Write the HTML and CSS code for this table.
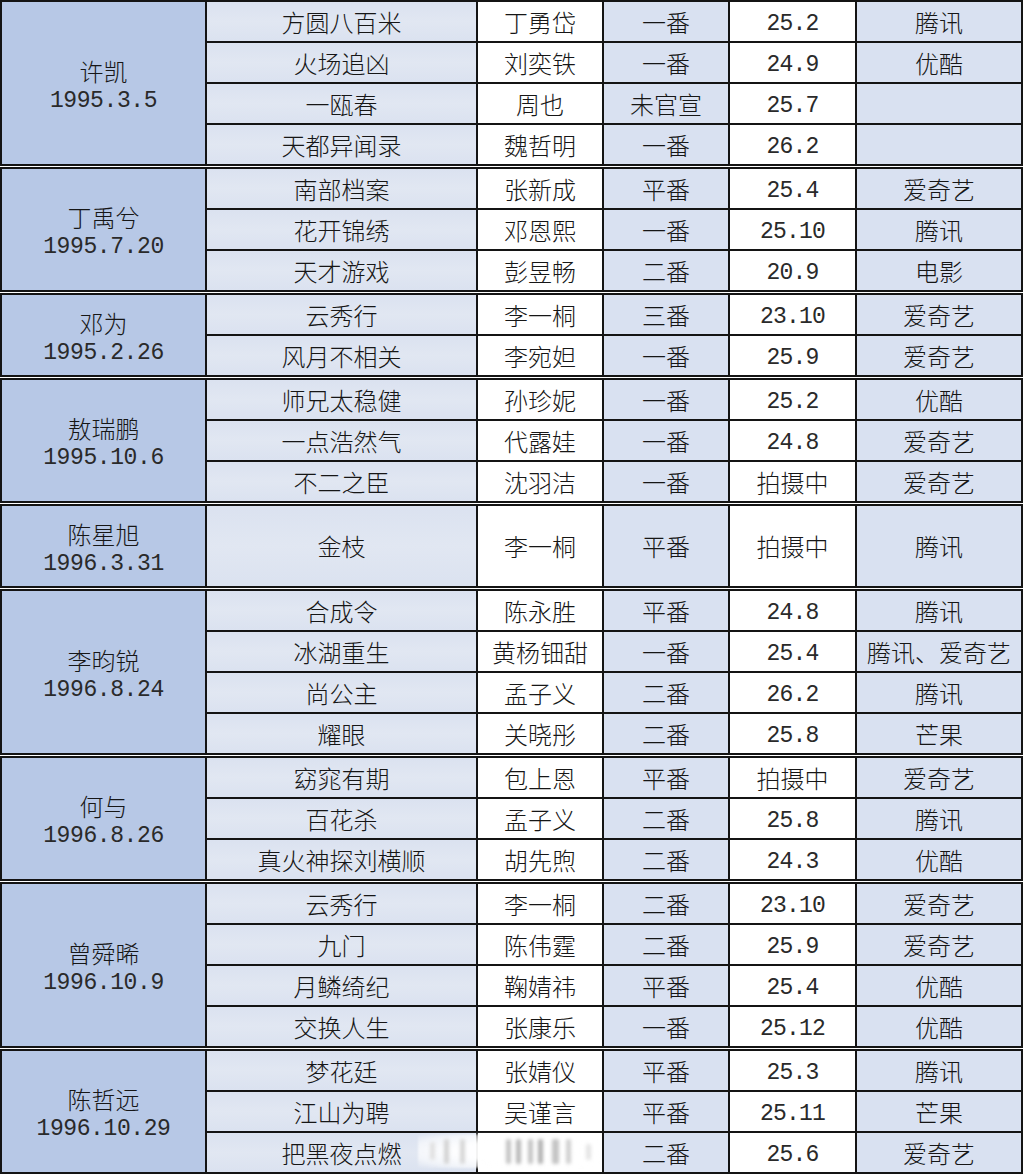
FILE: index.html
```html
<!DOCTYPE html>
<html lang="zh">
<head>
<meta charset="utf-8">
<title>剧集表</title>
<link rel="stylesheet" href="styles.css">
</head>
<body>
<div class="sheet">

<table class="grp">
<colgroup><col class="c1"><col class="c2"><col class="c3"><col class="c4"><col class="c5"><col class="c6"></colgroup>
<tr><td class="name" rowspan="4"><div class="nm">许凯</div><div class="num">1995.3.5</div></td><td class="title">方圆八百米</td><td class="actor">丁勇岱</td><td class="rank">一番</td><td class="date"><span class="num">25.2</span></td><td class="plat">腾讯</td></tr>
<tr><td class="title">火场追凶</td><td class="actor">刘奕铁</td><td class="rank">一番</td><td class="date"><span class="num">24.9</span></td><td class="plat">优酷</td></tr>
<tr><td class="title">一瓯春</td><td class="actor">周也</td><td class="rank">未官宣</td><td class="date"><span class="num">25.7</span></td><td class="plat"></td></tr>
<tr><td class="title">天都异闻录</td><td class="actor">魏哲明</td><td class="rank">一番</td><td class="date"><span class="num">26.2</span></td><td class="plat"></td></tr>
</table>

<table class="grp">
<colgroup><col class="c1"><col class="c2"><col class="c3"><col class="c4"><col class="c5"><col class="c6"></colgroup>
<tr><td class="name" rowspan="3"><div class="nm">丁禹兮</div><div class="num">1995.7.20</div></td><td class="title">南部档案</td><td class="actor">张新成</td><td class="rank">平番</td><td class="date"><span class="num">25.4</span></td><td class="plat">爱奇艺</td></tr>
<tr><td class="title">花开锦绣</td><td class="actor">邓恩熙</td><td class="rank">一番</td><td class="date"><span class="num">25.10</span></td><td class="plat">腾讯</td></tr>
<tr><td class="title">天才游戏</td><td class="actor">彭昱畅</td><td class="rank">二番</td><td class="date"><span class="num">20.9</span></td><td class="plat">电影</td></tr>
</table>

<table class="grp">
<colgroup><col class="c1"><col class="c2"><col class="c3"><col class="c4"><col class="c5"><col class="c6"></colgroup>
<tr><td class="name" rowspan="2"><div class="nm">邓为</div><div class="num">1995.2.26</div></td><td class="title">云秀行</td><td class="actor">李一桐</td><td class="rank">三番</td><td class="date"><span class="num">23.10</span></td><td class="plat">爱奇艺</td></tr>
<tr><td class="title">风月不相关</td><td class="actor">李宛妲</td><td class="rank">一番</td><td class="date"><span class="num">25.9</span></td><td class="plat">爱奇艺</td></tr>
</table>

<table class="grp">
<colgroup><col class="c1"><col class="c2"><col class="c3"><col class="c4"><col class="c5"><col class="c6"></colgroup>
<tr><td class="name" rowspan="3"><div class="nm">敖瑞鹏</div><div class="num">1995.10.6</div></td><td class="title">师兄太稳健</td><td class="actor">孙珍妮</td><td class="rank">一番</td><td class="date"><span class="num">25.2</span></td><td class="plat">优酷</td></tr>
<tr><td class="title">一点浩然气</td><td class="actor">代露娃</td><td class="rank">一番</td><td class="date"><span class="num">24.8</span></td><td class="plat">爱奇艺</td></tr>
<tr><td class="title">不二之臣</td><td class="actor">沈羽洁</td><td class="rank">一番</td><td class="date">拍摄中</td><td class="plat">爱奇艺</td></tr>
</table>

<table class="grp">
<colgroup><col class="c1"><col class="c2"><col class="c3"><col class="c4"><col class="c5"><col class="c6"></colgroup>
<tr class="tall"><td class="name"><div class="nm">陈星旭</div><div class="num">1996.3.31</div></td><td class="title">金枝</td><td class="actor">李一桐</td><td class="rank">平番</td><td class="date">拍摄中</td><td class="plat">腾讯</td></tr>
</table>

<table class="grp">
<colgroup><col class="c1"><col class="c2"><col class="c3"><col class="c4"><col class="c5"><col class="c6"></colgroup>
<tr><td class="name" rowspan="4"><div class="nm">李昀锐</div><div class="num">1996.8.24</div></td><td class="title">合成令</td><td class="actor">陈永胜</td><td class="rank">平番</td><td class="date"><span class="num">24.8</span></td><td class="plat">腾讯</td></tr>
<tr><td class="title">冰湖重生</td><td class="actor">黄杨钿甜</td><td class="rank">一番</td><td class="date"><span class="num">25.4</span></td><td class="plat">腾讯、爱奇艺</td></tr>
<tr><td class="title">尚公主</td><td class="actor">孟子义</td><td class="rank">二番</td><td class="date"><span class="num">26.2</span></td><td class="plat">腾讯</td></tr>
<tr><td class="title">耀眼</td><td class="actor">关晓彤</td><td class="rank">二番</td><td class="date"><span class="num">25.8</span></td><td class="plat">芒果</td></tr>
</table>

<table class="grp">
<colgroup><col class="c1"><col class="c2"><col class="c3"><col class="c4"><col class="c5"><col class="c6"></colgroup>
<tr><td class="name" rowspan="3"><div class="nm">何与</div><div class="num">1996.8.26</div></td><td class="title">窈窕有期</td><td class="actor">包上恩</td><td class="rank">平番</td><td class="date">拍摄中</td><td class="plat">爱奇艺</td></tr>
<tr><td class="title">百花杀</td><td class="actor">孟子义</td><td class="rank">二番</td><td class="date"><span class="num">25.8</span></td><td class="plat">腾讯</td></tr>
<tr><td class="title">真火神探刘横顺</td><td class="actor">胡先煦</td><td class="rank">二番</td><td class="date"><span class="num">24.3</span></td><td class="plat">优酷</td></tr>
</table>

<table class="grp">
<colgroup><col class="c1"><col class="c2"><col class="c3"><col class="c4"><col class="c5"><col class="c6"></colgroup>
<tr><td class="name" rowspan="4"><div class="nm">曾舜晞</div><div class="num">1996.10.9</div></td><td class="title">云秀行</td><td class="actor">李一桐</td><td class="rank">二番</td><td class="date"><span class="num">23.10</span></td><td class="plat">爱奇艺</td></tr>
<tr><td class="title">九门</td><td class="actor">陈伟霆</td><td class="rank">二番</td><td class="date"><span class="num">25.9</span></td><td class="plat">爱奇艺</td></tr>
<tr><td class="title">月鳞绮纪</td><td class="actor">鞠婧祎</td><td class="rank">平番</td><td class="date"><span class="num">25.4</span></td><td class="plat">优酷</td></tr>
<tr><td class="title">交换人生</td><td class="actor">张康乐</td><td class="rank">一番</td><td class="date"><span class="num">25.12</span></td><td class="plat">优酷</td></tr>
</table>

<table class="grp last">
<colgroup><col class="c1"><col class="c2"><col class="c3"><col class="c4"><col class="c5"><col class="c6"></colgroup>
<tr><td class="name" rowspan="3"><div class="nm">陈哲远</div><div class="num">1996.10.29</div></td><td class="title">梦花廷</td><td class="actor">张婧仪</td><td class="rank">平番</td><td class="date"><span class="num">25.3</span></td><td class="plat">腾讯</td></tr>
<tr><td class="title">江山为聘</td><td class="actor">吴谨言</td><td class="rank">平番</td><td class="date"><span class="num">25.11</span></td><td class="plat">芒果</td></tr>
<tr><td class="title">把黑夜点燃</td><td class="actor"></td><td class="rank">二番</td><td class="date"><span class="num">25.6</span></td><td class="plat">爱奇艺</td></tr>
</table>

<div class="watermark" aria-hidden="true">
  <span class="bar b1"></span><span class="bar b2"></span><span class="bar b3"></span><span class="bar b4"></span><span class="bar b5"></span><span class="bar b6"></span><span class="bar b7"></span><span class="bar b8"></span><span class="bar b9"></span><span class="bar b10"></span>
</div>

</div>
</body>
</html>
```

FILE: styles.css
```css
html, body {
  margin: 0;
  padding: 0;
  background: #ffffff;
}

.sheet {
  position: relative;
  width: 1024px;
  height: 1175px;
  display: flex;
  flex-direction: column;
  gap: 1px;
}

.grp {
  border-collapse: collapse;
  table-layout: fixed;
  width: 1023px;
  border: 2px solid #141414;
  font-family: "Noto Sans CJK SC", sans-serif;
  font-weight: 300;
  font-size: 24px;
  color: #161616;
}

.c1 { width: 205px; }
.c2 { width: 271px; }
.c3 { width: 126px; }
.c4 { width: 126px; }
.c5 { width: 127px; }
.c6 { width: 166px; }

.grp td {
  border: 2px solid #141414;
  height: 39px;
  padding: 0;
  text-align: center;
  vertical-align: middle;
  line-height: 30px;
  white-space: nowrap;
  overflow: hidden;
}

.grp tr.tall td {
  height: 80px;
}

.grp td.name {
  background: #b7c8e6;
  height: auto;
}

.name .nm {
  padding-top: 5px;
  height: 30px;
}

.name .num {
  display: block;
  height: 30px;
  line-height: 30px;
  letter-spacing: -0.4px;
}

.title {
  background: linear-gradient(180deg, #dbe2f0 0%, #e1e7f2 50%, #dbe2f0 100%);
}

.actor,
.date {
  background: #ffffff;
}

.rank,
.plat {
  background: #d9e1f1;
}

.num {
  font-family: "Liberation Mono", "DejaVu Sans Mono", monospace;
  font-weight: 400;
  font-size: 23px;
  letter-spacing: -0.8px;
  color: #2a2a2a;
}

.watermark {
  position: absolute;
  left: 418px;
  top: 1134px;
  width: 182px;
  height: 34px;
  background: radial-gradient(ellipse at center, rgba(255,255,255,0.95) 40%, rgba(255,255,255,0.6) 75%, rgba(255,255,255,0) 100%);
  filter: blur(1px);
}

.bar {
  position: absolute;
  top: 5px;
  width: 5px;
  height: 25px;
  background: #c4c4c4;
  border-radius: 2px;
  filter: blur(1.6px);
}
.b1 { left: 12px; height: 18px; top: 8px; background: #e0e0e0; }
.b2 { left: 26px; background: #d2d2d2; }
.b3 { left: 42px; background: #d6d6d6; }
.b4 { left: 88px; }
.b5 { left: 98px; background: #b8b8b8; }
.b6 { left: 110px; }
.b7 { left: 120px; background: #b0b0b0; }
.b8 { left: 134px; width: 7px; }
.b9 { left: 148px; background: #cfcfcf; }
.b10 { left: 168px; height: 16px; top: 10px; background: #e4e4e4; }
```
